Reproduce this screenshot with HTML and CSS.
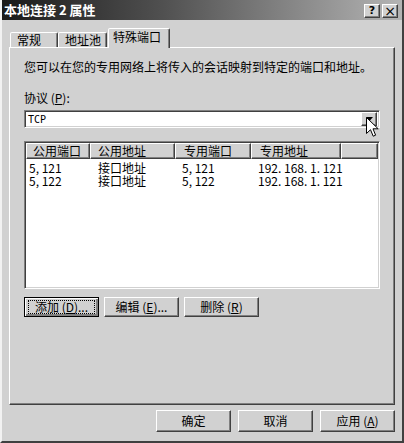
FILE: index.html
```html
<!DOCTYPE html>
<html>
<head>
<meta charset="utf-8">
<link rel="stylesheet" href="styles.css">
</head>
<body>
<div class="window">
  <div class="titlebar">
    <span class="title">本地连接 2 属性</span>
    <div class="caption-btns">
      <span class="cbtn">?</span>
      <span class="cbtn close">×</span>
    </div>
  </div>
  <div class="tabs">
    <div class="tab t1">常规</div>
    <div class="tab t2">地址池</div>
    <div class="tab t3 active">特殊端口</div>
  </div>
  <div class="panel">
    <p class="desc">您可以在您的专用网络上将传入的会话映射到特定的端口和地址。</p>
    <div class="label">协议 (<u>P</u>):</div>
    <div class="combo">
      <span class="combo-text">TCP</span>
      <span class="drop"><svg width="7" height="4" viewBox="0 0 7 4"><path d="M0 0h7L3.5 4z" fill="#000"/></svg></span>
    </div>
    <div class="list">
      <div class="lhead">
        <div class="hc c1">公用端口</div>
        <div class="hc c2">公用地址</div>
        <div class="hc c3">专用端口</div>
        <div class="hc c4">专用地址</div>
        <div class="hc c5"></div>
      </div>
      <div class="rows">
        <div class="row"><span class="c1">5, 121</span><span class="c2">接口地址</span><span class="c3">5, 121</span><span class="c4">192. 168. 1. 121</span></div>
        <div class="row"><span class="c1">5, 122</span><span class="c2">接口地址</span><span class="c3">5, 122</span><span class="c4">192. 168. 1. 121</span></div>
      </div>
    </div>
    <div class="actions">
      <button class="btn default"><span class="focus">添加 (<u>D</u>)...</span></button>
      <button class="btn">编辑 (<u>E</u>)...</button>
      <button class="btn">删除 (<u>R</u>)</button>
    </div>
  </div>
  <div class="footer">
    <button class="btn big">确定</button>
    <button class="btn big">取消</button>
    <button class="btn big">应用 (<u>A</u>)</button>
  </div>
  <svg class="cursor" width="13" height="21" viewBox="0 0 13 21">
    <path d="M0.5 0.5V16.5L4.5 12.7L7.2 19.2L9.6 18.2L7 11.8H12.2Z" fill="#fff" stroke="#000" stroke-width="1"/>
  </svg>
</div>
</body>
</html>
```

FILE: styles.css
```css
html, body {
  margin: 0;
  padding: 0;
  background: #d1d1d1;
}

.window {
  position: relative;
  width: 404px;
  height: 443px;
  box-sizing: border-box;
  background: #d1d1d1;
  border-left: 2px solid #f2f2f2;
  border-right: 2px solid #404040;
  border-bottom: 2px solid #404040;
  font-family: "Noto Sans CJK SC", sans-serif;
  font-size: 12px;
  color: #000;
  overflow: hidden;
}

.titlebar {
  height: 20px;
  display: flex;
  align-items: center;
  padding: 0 4px 0 2px;
  background: linear-gradient(to right, #1a1a1a 0%, #505050 40%, #b4b4b4 100%);
}

.title {
  color: #fff;
  font-weight: bold;
  font-size: 13px;
  line-height: 16px;
}

.caption-btns {
  margin-left: auto;
  display: flex;
  gap: 2px;
  margin-top: 2px;
}

.cbtn {
  width: 14px;
  height: 12px;
  background: #d1d1d1;
  border: 1px solid;
  border-color: #fff #404040 #404040 #fff;
  box-shadow: inset -1px -1px #808080;
  font-family: "DejaVu Sans", sans-serif;
  font-weight: bold;
  font-size: 11px;
  line-height: 12px;
  text-align: center;
}

.cbtn.close {
  font-size: 14px;
  font-weight: normal;
}

.tabs {
  display: flex;
  align-items: flex-end;
  height: 19px;
  margin: 8px 0 0 8px;
}

.tab {
  box-sizing: border-box;
  height: 15px;
  padding-left: 6px;
  line-height: 14px;
  background: #d1d1d1;
  border: 1px solid;
  border-bottom: none;
  border-color: #fff #404040 transparent #fff;
  box-shadow: inset -1px 0 #808080;
  border-radius: 2px 2px 0 0;
}

.t1 { width: 48px; }
.t2 { width: 49px; }
.t3 { width: 62px; }

.tab.active {
  position: relative;
  z-index: 1;
  height: 20px;
  margin-bottom: -1px;
  margin-left: 1px;
  padding-left: 4px;
  line-height: 16px;
}

.panel {
  box-sizing: border-box;
  width: 386px;
  height: 358px;
  margin-left: 7px;
  padding: 12px 0 0 14px;
  border: 1px solid;
  border-color: #fff #404040 #404040 #fff;
  box-shadow: inset -1px -1px #808080;
}

.desc {
  margin: 0;
  line-height: 14px;
  white-space: nowrap;
}

.label {
  margin-top: 17px;
  line-height: 14px;
}

.combo {
  margin-top: 5px;
  width: 356px;
  height: 18px;
  box-sizing: border-box;
  display: flex;
  align-items: center;
  background: #fff;
  border: 1px solid;
  border-color: #808080 #fff #fff #808080;
  box-shadow: inset 1px 1px #404040, inset -1px -1px #d1d1d1;
  padding: 0 2px 0 3px;
}

.combo-text {
  font-family: "DejaVu Sans Mono", monospace;
  font-size: 10px;
}

.drop {
  margin-left: auto;
  width: 14px;
  height: 12px;
  display: flex;
  align-items: center;
  justify-content: center;
  background: #d1d1d1;
  border: 1px solid;
  border-color: #fff #404040 #404040 #fff;
  box-shadow: inset -1px -1px #808080;
}

.list {
  margin-top: 13px;
  width: 356px;
  height: 148px;
  box-sizing: border-box;
  background: #fff;
  border: 1px solid;
  border-color: #808080 #fff #fff #808080;
  box-shadow: inset 1px 1px #404040, inset -1px -1px #d1d1d1;
  padding: 1px;
}

.lhead {
  display: flex;
  height: 16px;
}

.hc {
  box-sizing: border-box;
  height: 16px;
  padding-left: 6px;
  line-height: 14px;
  background: #d1d1d1;
  border: 1px solid;
  border-color: #fff #404040 #404040 #fff;
  box-shadow: inset -1px -1px #808080;
}

.hc.c1 { width: 64px; }
.hc.c2 { width: 85px; padding-left: 7px; }
.hc.c3 { width: 76px; padding-left: 8px; }
.hc.c4 { width: 90px; padding-left: 8px; }
.hc.c5 { flex: 1; }

.rows {
  padding-top: 2px;
}

.row {
  display: flex;
  height: 13px;
  line-height: 13px;
}

.row span { display: block; white-space: nowrap; }
.row .c1 { width: 72px; padding-left: 3px; box-sizing: border-box; }
.row .c2 { width: 84px; }
.row .c3 { width: 76px; }
.row .c4 { width: 90px; }

.actions {
  display: flex;
  gap: 5px;
  margin-top: 8px;
}

.btn {
  box-sizing: border-box;
  width: 75px;
  height: 20px;
  padding: 0;
  background: #d1d1d1;
  border: 1px solid;
  border-color: #fff #404040 #404040 #fff;
  box-shadow: inset -1px -1px #808080;
  font-family: "Noto Sans CJK SC", sans-serif;
  font-size: 12px;
  color: #000;
  line-height: 14px;
  display: flex;
  align-items: center;
  justify-content: center;
}

.btn.default {
  border-color: #000;
  box-shadow: inset 1px 1px #fff, inset -2px -2px #808080;
}

.focus {
  display: block;
  box-sizing: border-box;
  width: 67px;
  height: 14px;
  border: 1px dotted #000;
  line-height: 12px;
  text-align: center;
}

.footer {
  display: flex;
  justify-content: flex-end;
  gap: 7px;
  margin-top: 5px;
  padding-right: 7px;
}

.btn.big {
  height: 22px;
}

.cursor {
  position: absolute;
  left: 364px;
  top: 117px;
}
```
